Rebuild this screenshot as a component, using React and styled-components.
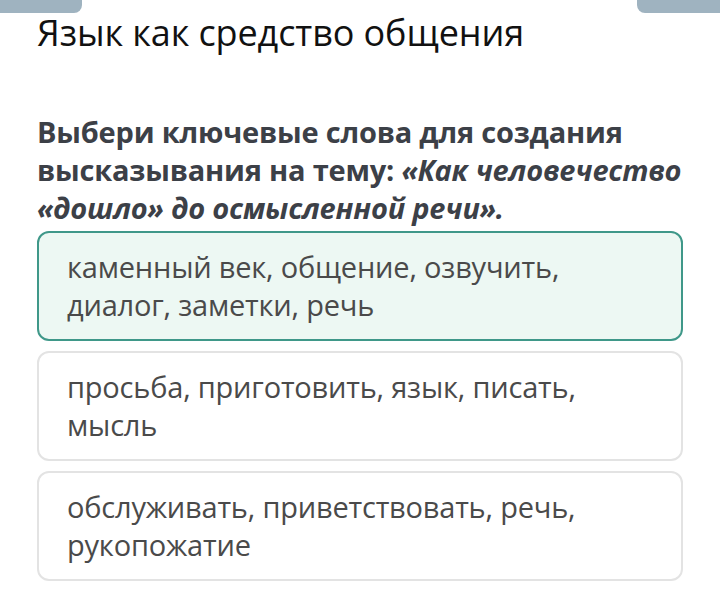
import React from "react";
import styled, { createGlobalStyle } from "styled-components";

const GlobalStyle = createGlobalStyle`
  html, body {
    margin: 0;
    padding: 0;
    background: #ffffff;
  }
  body {
    font-family: "Open Sans", "Noto Sans", sans-serif;
  }
`;

const options = [
  { text: "каменный век, общение, озвучить, диалог, заметки, речь", selected: true },
  { text: "просьба, приготовить, язык, писать, мысль" },
  { text: "обслуживать, приветствовать, речь, рукопожатие" },
];

export default function App() {
  return (
    <>
      <GlobalStyle />
      <Page>
        <TabBar>
          <Tab $side="left" />
          <Tab $side="right" />
        </TabBar>
        <Content>
          <Title>Язык как средство общения</Title>
          <Question>
            Выбери ключевые слова для создания высказывания на тему:{" "}
            <em>«Как человечество «дошло» до осмысленной речи».</em>
          </Question>
          <Options>
            {options.map((o) => (
              <Option key={o.text} $selected={o.selected}>
                {o.text}
              </Option>
            ))}
          </Options>
        </Content>
      </Page>
    </>
  );
}

const Page = styled.div`
  width: 720px;
  height: 598px;
  overflow: hidden;
  background: #fff;
`;

const TabBar = styled.div`
  display: flex;
  justify-content: space-between;
  height: 13px;
`;

const Tab = styled.div`
  width: ${(p) => (p.$side === "left" ? "82px" : "83px")};
  height: 13px;
  background: #9fb3c0;
  border-radius: ${(p) => (p.$side === "left" ? "0 0 8px 0" : "0 0 0 8px")};
`;

const Content = styled.div`
  padding: 0 37px;
`;

const Title = styled.h1`
  margin: 0;
  font-family: "Open Sans", sans-serif;
  font-weight: 400;
  font-size: 36px;
  line-height: 40px;
  color: #111;
  letter-spacing: -0.1px;
`;

const Question = styled.p`
  margin: 60px 0 0 0;
  font-family: "Open Sans", sans-serif;
  font-weight: 700;
  font-size: 29px;
  line-height: 38px;
  color: #3c4047;
  letter-spacing: -0.2px;

  em {
    font-style: italic;
  }
`;

const Options = styled.div`
  display: flex;
  flex-direction: column;
  gap: 10px;
  margin-top: 4px;
`;

const Option = styled.div`
  box-sizing: border-box;
  min-height: 108px;
  padding: 15px 60px 15px 28px;
  border-radius: 12px;
  border: 2px solid ${(p) => (p.$selected ? "#3f9889" : "#e3e3e3")};
  background: ${(p) => (p.$selected ? "#edf8f3" : "#ffffff")};
  font-family: "Open Sans", sans-serif;
  font-size: 29px;
  line-height: 38px;
  color: #4a4a4a;
  letter-spacing: -0.2px;
`;
